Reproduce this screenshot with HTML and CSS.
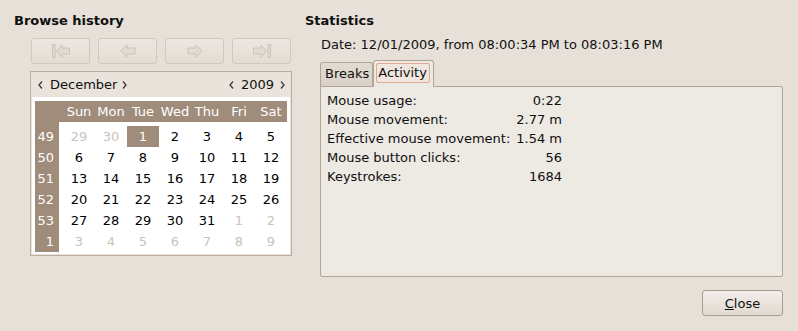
FILE: index.html
```html
<!DOCTYPE html>
<html lang="en">
<head>
    <meta charset="UTF-8">
    <title>Statistics</title>
    <link rel="stylesheet" href="styles.css">
</head>
<body>
    <div class="dialog">
        <div class="columns">
            <div class="history">
                <h2>Browse history</h2>
                <div class="section">
                    <div class="nav">
                        <button class="nav-btn" disabled>
                            <svg width="18" height="14" viewBox="0 0 18 14"><rect x="0.5" y="0.5" width="2.5" height="13" class="ico"/><path d="M4.5 7 L10 0.8 L10 4 L17.5 4 L17.5 10 L10 10 L10 13.2 Z" class="ico"/></svg>
                        </button>
                        <button class="nav-btn" disabled>
                            <svg width="16" height="14" viewBox="0 0 16 14"><path d="M0.8 7 L7 0.8 L7 4 L15 4 L15 10 L7 10 L7 13.2 Z" class="ico"/></svg>
                        </button>
                        <button class="nav-btn" disabled>
                            <svg width="16" height="14" viewBox="0 0 16 14"><path d="M15.2 7 L9 0.8 L9 4 L1 4 L1 10 L9 10 L9 13.2 Z" class="ico"/></svg>
                        </button>
                        <button class="nav-btn" disabled>
                            <svg width="18" height="14" viewBox="0 0 18 14"><path d="M13.5 7 L8 0.8 L8 4 L0.5 4 L0.5 10 L8 10 L8 13.2 Z" class="ico"/><rect x="15" y="0.5" width="2.5" height="13" class="ico"/></svg>
                        </button>
                    </div>

                    <div class="calendar">
                        <div class="cal-head">
                            <div class="cal-group">
                                <svg class="chev" width="5" height="8" viewBox="0 0 5 8"><path d="M4 0.5 L1 4 L4 7.5"/></svg>
                                <span class="cal-month">December</span>
                                <svg class="chev" width="5" height="8" viewBox="0 0 5 8"><path d="M1 0.5 L4 4 L1 7.5"/></svg>
                            </div>
                            <div class="cal-group">
                                <svg class="chev" width="5" height="8" viewBox="0 0 5 8"><path d="M4 0.5 L1 4 L4 7.5"/></svg>
                                <span class="cal-year">2009</span>
                                <svg class="chev" width="5" height="8" viewBox="0 0 5 8"><path d="M1 0.5 L4 4 L1 7.5"/></svg>
                            </div>
                        </div>
                        <div class="cal-body">
                            <div class="cal-grid">
                                <div class="corner"></div>
                                <div class="weekdays">
                                    <span>Sun</span><span>Mon</span><span>Tue</span><span>Wed</span><span>Thu</span><span>Fri</span><span>Sat</span>
                                </div>
                                <div class="weeks">
                                    <span>49</span><span>50</span><span>51</span><span>52</span><span>53</span><span>1</span>
                                </div>
                                <div class="days">
                                    <span class="other">29</span><span class="other">30</span><span class="sel">1</span><span>2</span><span>3</span><span>4</span><span>5</span>
                                    <span>6</span><span>7</span><span>8</span><span>9</span><span>10</span><span>11</span><span>12</span>
                                    <span>13</span><span>14</span><span>15</span><span>16</span><span>17</span><span>18</span><span>19</span>
                                    <span>20</span><span>21</span><span>22</span><span>23</span><span>24</span><span>25</span><span>26</span>
                                    <span>27</span><span>28</span><span>29</span><span>30</span><span>31</span><span class="other">1</span><span class="other">2</span>
                                    <span class="other">3</span><span class="other">4</span><span class="other">5</span><span class="other">6</span><span class="other">7</span><span class="other">8</span><span class="other">9</span>
                                </div>
                            </div>
                        </div>
                    </div>
                </div>
            </div>

            <div class="stats">
                <h2>Statistics</h2>
                <div class="date">Date: 12/01/2009, from 08:00:34 PM to 08:03:16 PM</div>
                <div class="notebook">
                    <div class="tabs">
                        <div class="tab">Breaks</div>
                        <div class="tab active"><span class="focus">Activity</span></div>
                    </div>
                    <div class="panel">
                        <div class="stat-grid">
                            <span>Mouse usage:</span><span class="val">0:22</span>
                            <span>Mouse movement:</span><span class="val">2.77 m</span>
                            <span>Effective mouse movement:</span><span class="val">1.54 m</span>
                            <span>Mouse button clicks:</span><span class="val">56</span>
                            <span>Keystrokes:</span><span class="val">1684</span>
                        </div>
                    </div>
                </div>
            </div>
        </div>

        <div class="footer">
            <button class="close-btn"><u>C</u>lose</button>
        </div>
    </div>
</body>
</html>
```

FILE: styles.css
```css
/* statistics dialog, Human theme */
:root {
    --bg: #e6e0d8;
    --panel: #ede9e3;
    --border: #b3a595;
    --brown: #a08c7b;
    --text: #101010;
}
body {
    margin: 0;
    background-color: var(--bg);
    color: var(--text);
    font-family: "DejaVu Sans", sans-serif;
    font-size: 13px;
    line-height: 16px;
}
.dialog {
    display: flex;
    flex-direction: column;
    height: 331px;
    box-sizing: border-box;
    padding: 13px 15px 15px 14px;
}
.columns {
    display: flex;
    gap: 13px;
}
h2 {
    margin: 0;
    font-size: 13px;
    line-height: 16px;
    font-weight: bold;
}
.history {
    width: 278px;
}
.section {
    padding-left: 16px;
    margin-top: 9px;
}
.nav {
    display: flex;
    gap: 8px;
    padding-left: 1px;
}
.nav-btn {
    width: 59px;
    height: 26px;
    padding: 0;
    border: 1px solid #d2c8bc;
    border-radius: 3px;
    background: linear-gradient(#ece7e1, #e4ddd4);
    display: flex;
    align-items: center;
    justify-content: center;
}
.ico {
    fill: #e2dbd2;
    stroke: #cdc3b8;
    stroke-width: 1;
}
.calendar {
    margin-top: 7px;
    width: 262px;
    box-sizing: border-box;
    border: 1px solid #bbad9e;
    background-color: #e9e3dc;
}
.cal-head {
    height: 25px;
    display: flex;
    justify-content: space-between;
    align-items: center;
    padding: 0 6px 0 7px;
}
.cal-group {
    display: flex;
    align-items: center;
}
.chev {
    fill: none;
    stroke: #3a3a3a;
    stroke-width: 1.3;
}
.cal-month {
    margin: 0 5px 0 7px;
}
.cal-year {
    margin: 0 6px 0 7px;
}
.cal-body {
    background-color: #ffffff;
    margin: 0 1px 1px;
    padding: 4px 3px 2px 3px;
}
.cal-grid {
    display: grid;
    grid-template-columns: 24px 228px;
    grid-template-rows: 21px 130px;
    background-color: var(--brown);
    color: #ffffff;
}
.weekdays {
    display: grid;
    grid-template-columns: repeat(7, 32px);
    padding-left: 4px;
    align-items: center;
    text-align: center;
}
.weeks {
    display: grid;
    grid-template-rows: repeat(6, 21px);
    padding-top: 4px;
    align-items: center;
    text-align: right;
    padding-right: 5px;
}
.days {
    display: grid;
    grid-template-columns: repeat(7, 32px);
    grid-template-rows: repeat(6, 21px);
    padding: 4px 0 0 4px;
    background-color: #ffffff;
    color: #000000;
    text-align: center;
}
.days span {
    line-height: 21px;
}
.days .other {
    color: #cbc2b9;
}
.days .sel {
    background-color: var(--brown);
    color: #ffffff;
}
.stats {
    flex: 1;
}
.date {
    margin-top: 8px;
    padding-left: 16px;
}
.notebook {
    margin: 7px 0 0 15px;
}
.tabs {
    display: flex;
    align-items: flex-end;
    height: 26px;
}
.tab {
    height: 24px;
    box-sizing: border-box;
    border: 1px solid var(--border);
    border-bottom: none;
    border-radius: 3px 3px 0 0;
    background: linear-gradient(#e2dbd2, #d9d1c7);
    padding: 3px 3px 0 4px;
}
.tab.active {
    height: 27px;
    margin-bottom: -1px;
    background: var(--panel);
    padding: 2px 3px 0 2px;
    position: relative;
}
.focus {
    display: block;
    border: 1px solid #e2a892;
    border-radius: 2px;
    padding: 1px 2px 1px 1px;
    background-color: #efe6df;
}
.panel {
    height: 191px;
    box-sizing: border-box;
    border: 1px solid var(--border);
    border-radius: 0 2px 2px 2px;
    background-color: var(--panel);
    padding: 4px 6px;
}
.stat-grid {
    display: grid;
    grid-template-columns: auto auto;
    justify-content: start;
    column-gap: 6px;
    line-height: 19px;
}
.stat-grid .val {
    text-align: right;
}
.footer {
    margin-top: auto;
    display: flex;
    justify-content: flex-end;
}
.close-btn {
    width: 81px;
    height: 26px;
    padding: 0;
    border: 1px solid #ab9d8d;
    border-radius: 3px;
    background: linear-gradient(#f1ede8, #e2dad1);
    font-family: "DejaVu Sans", sans-serif;
    font-size: 13px;
    color: var(--text);
}
```
